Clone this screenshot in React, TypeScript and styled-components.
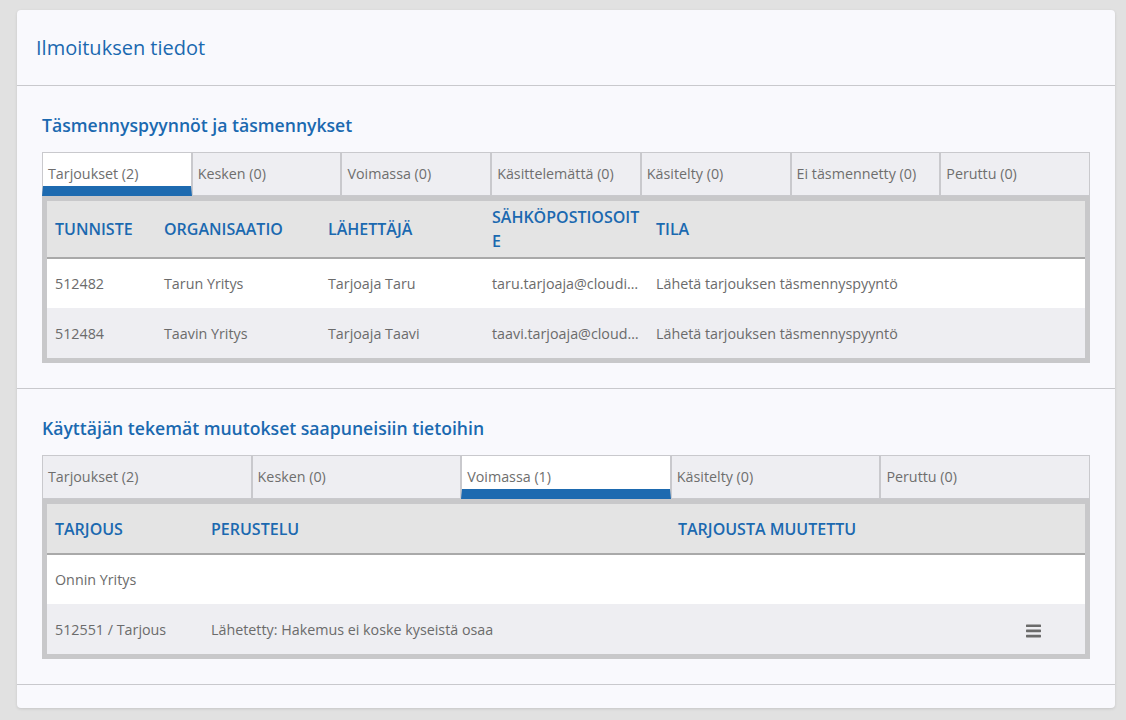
import React from 'react';
import styled, { createGlobalStyle } from 'styled-components';

const GlobalStyle = createGlobalStyle`
    html, body {
        margin: 0;
        padding: 0;
        background: #e1e1e1;
        font-family: 'Open Sans', 'Noto Sans', sans-serif;
    }
    * {
        box-sizing: border-box;
    }
`;

interface Tab {
    label: string;
    active?: boolean;
}

interface Column {
    title: string;
    width?: number;
}

const requestTabs: Tab[] = [
    { label: 'Tarjoukset (2)', active: true },
    { label: 'Kesken (0)' },
    { label: 'Voimassa (0)' },
    { label: 'Käsittelemättä (0)' },
    { label: 'Käsitelty (0)' },
    { label: 'Ei täsmennetty (0)' },
    { label: 'Peruttu (0)' },
];

const changeTabs: Tab[] = [
    { label: 'Tarjoukset (2)' },
    { label: 'Kesken (0)' },
    { label: 'Voimassa (1)', active: true },
    { label: 'Käsitelty (0)' },
    { label: 'Peruttu (0)' },
];

const requestColumns: Column[] = [
    { title: 'Tunniste', width: 109 },
    { title: 'Organisaatio', width: 164 },
    { title: 'Lähettäjä', width: 164 },
    { title: 'Sähköpostiosoite', width: 164 },
    { title: 'Tila' },
];

const requestRows = [
    ['512482', 'Tarun Yritys', 'Tarjoaja Taru', 'taru.tarjoaja@cloudia.fi', 'Lähetä tarjouksen täsmennyspyyntö'],
    ['512484', 'Taavin Yritys', 'Tarjoaja Taavi', 'taavi.tarjoaja@cloudia.fi', 'Lähetä tarjouksen täsmennyspyyntö'],
];

const changeColumns: Column[] = [
    { title: 'Tarjous', width: 156 },
    { title: 'Perustelu', width: 467 },
    { title: 'Tarjousta muutettu' },
];

const Tabs = ({ tabs }: { tabs: Tab[] }) => (
    <TabRow $count={tabs.length}>
        {tabs.map((tab) => (
            <TabItem key={tab.label} $active={!!tab.active}>
                {tab.label}
            </TabItem>
        ))}
    </TabRow>
);

const TableHead = ({ columns }: { columns: Column[] }) => (
    <>
        <colgroup>
            {columns.map((col) => (
                <col key={col.title} style={col.width ? { width: col.width } : undefined} />
            ))}
        </colgroup>
        <thead>
            <tr>
                {columns.map((col) => (
                    <HeadCell key={col.title}>{col.title}</HeadCell>
                ))}
            </tr>
        </thead>
    </>
);

const MenuIcon = () => (
    <svg width="15" height="14" viewBox="0 0 15 14" fill="#6b6b6b">
        <rect x="0" y="0.5" width="15" height="2.6" rx="0.6" />
        <rect x="0" y="5.6" width="15" height="2.6" rx="0.6" />
        <rect x="0" y="10.8" width="15" height="2.6" rx="0.6" />
    </svg>
);

const App = () => {
    return (
        <Page>
            <GlobalStyle />
            <Card>
                <CardHeader>
                    <CardTitle>Ilmoituksen tiedot</CardTitle>
                </CardHeader>

                <Section>
                    <SectionTitle>Täsmennyspyynnöt ja täsmennykset</SectionTitle>
                    <Tabs tabs={requestTabs} />
                    <TableFrame>
                        <Table>
                            <TableHead columns={requestColumns} />
                            <tbody>
                                {requestRows.map((row, i) => (
                                    <Row key={row[0]} $striped={i % 2 === 1}>
                                        {row.map((cell, j) => (
                                            <Cell key={j}>{cell}</Cell>
                                        ))}
                                    </Row>
                                ))}
                            </tbody>
                        </Table>
                    </TableFrame>
                </Section>

                <Section>
                    <SectionTitle>Käyttäjän tekemät muutokset saapuneisiin tietoihin</SectionTitle>
                    <Tabs tabs={changeTabs} />
                    <TableFrame>
                        <Table>
                            <TableHead columns={changeColumns} />
                            <tbody>
                                <Row $striped={false}>
                                    <Cell colSpan={3}>Onnin Yritys</Cell>
                                </Row>
                                <Row $striped>
                                    <Cell>512551 / Tarjous</Cell>
                                    <Cell>Lähetetty: Hakemus ei koske kyseistä osaa</Cell>
                                    <ActionCell>
                                        <MenuButton>
                                            <MenuIcon />
                                        </MenuButton>
                                    </ActionCell>
                                </Row>
                            </tbody>
                        </Table>
                    </TableFrame>
                </Section>

                <CardFooter />
            </Card>
        </Page>
    );
};

const Page = styled.div`
    min-height: 720px;
    padding: 10px 11px 13px 17px;
`;

const Card = styled.div`
    background: #f9f9fd;
    border-radius: 4px;
    box-shadow: 0 1px 3px rgba(0, 0, 0, 0.12);
`;

const CardHeader = styled.div`
    height: 76px;
    padding: 0 19px;
    display: flex;
    align-items: center;
    border-bottom: 1px solid #c9c9cd;
`;

const CardTitle = styled.h1`
    margin: 0;
    font-size: 20px;
    font-weight: 400;
    color: #1b69b0;
`;

const Section = styled.div`
    padding: 27px 25px 25px;
    border-bottom: 1px solid #c9c9cd;
`;

const SectionTitle = styled.h2`
    margin: 0 0 15px;
    font-size: 17.6px;
    line-height: 24px;
    font-weight: 600;
    color: #1b69b0;
`;

const TabRow = styled.div<{ $count: number }>`
    display: grid;
    grid-template-columns: repeat(${(p) => p.$count}, 1fr);
`;

const TabItem = styled.div<{ $active: boolean }>`
    height: 44px;
    padding: 11px 5px 0;
    font-size: 14.3px;
    line-height: 20px;
    color: #6e6e6e;
    white-space: nowrap;
    overflow: hidden;
    border: 1px solid #c9c9cd;
    border-bottom: ${(p) => (p.$active ? '10px solid #1d6ab0' : '1px solid #c9c9cd')};
    background: ${(p) => (p.$active ? '#ffffff' : '#eeeef2')};
`;

const TableFrame = styled.div`
    border: 5px solid #c8c8ca;
    background: #ffffff;
`;

const Table = styled.table`
    width: 100%;
    border-collapse: collapse;
    table-layout: fixed;
`;

const HeadCell = styled.th`
    height: 50px;
    padding: 4px 8px;
    background: #e4e4e4;
    border-bottom: 2px solid #a9a9a9;
    text-align: left;
    vertical-align: middle;
    font-size: 16px;
    line-height: 24px;
    font-weight: 600;
    text-transform: uppercase;
    color: #1b69b0;
    word-break: break-all;
`;

const Row = styled.tr<{ $striped: boolean }>`
    background: ${(p) => (p.$striped ? '#eeeef2' : '#ffffff')};
    & + & td {
        border-top: 1px solid #d9d9dd;
    }
`;

const Cell = styled.td`
    height: 50px;
    padding: 0 8px;
    font-size: 14.3px;
    color: #6b6b6b;
    white-space: nowrap;
    overflow: hidden;
    text-overflow: ellipsis;
`;

const ActionCell = styled(Cell)`
    text-align: right;
    padding-right: 44px;
`;

const MenuButton = styled.span`
    display: inline-flex;
    vertical-align: middle;
    cursor: pointer;
`;

const CardFooter = styled.div`
    height: 23px;
`;

export default App;
